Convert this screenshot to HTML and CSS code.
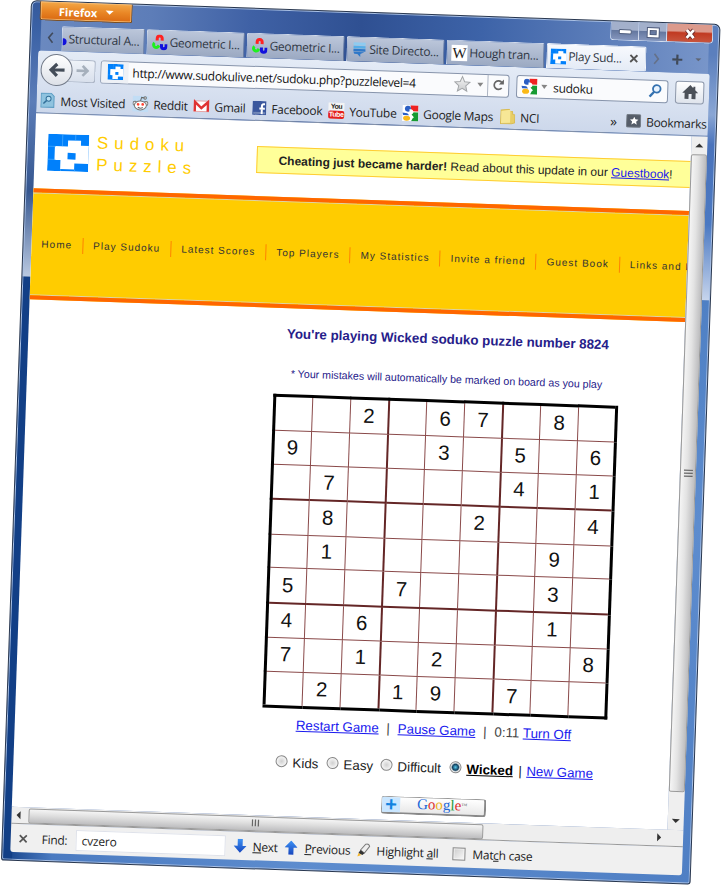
FILE: index.html
```html
<!DOCTYPE html>
<html lang="en">
<head>
<meta charset="utf-8">
<title>Play Sudoku</title>
<link rel="stylesheet" href="styles.css">
</head>
<body>
<svg class="defs" width="0" height="0">
  <defs>
    <linearGradient id="star-fill" x1="0" y1="0" x2="0" y2="1"><stop offset="0" stop-color="#f6f6f6"/><stop offset="1" stop-color="#c8cacc"/></linearGradient>
    <linearGradient id="arrow-fill" x1="0" y1="0" x2="0" y2="1"><stop offset="0" stop-color="#3d92f5"/><stop offset="1" stop-color="#1746bd"/></linearGradient>
    <symbol id="sudoku" viewBox="0 0 41 37" preserveAspectRatio="none">
      <path fill="#0080fb" d="M0 0h41v37H0z"/>
      <path fill="#fff" d="M20 6h13v5h8v18H27v6H13v-9H7V12h13z"/>
      <path fill="#0080fb" d="M20 18.500h8v6.500h-8z"/>
      <path fill="none" stroke="#58b4ff" stroke-width=".6" d="M0 12.500h8M14.500 0v12M27.500 0v6M0 25.500h8M13.500 35v2M27.500 35v2"/>
    </symbol>
    <symbol id="magnets" viewBox="0 0 16 16">
      <g fill="none" stroke-width="3">
        <path stroke="#f22" d="M5.500 6V4a2.500 2.500 0 0 1 5 0v2"/>
        <path stroke="#1ff01f" d="M3 8.500a2.600 2.600 0 1 0 3.500 4L7.500 11"/>
        <path stroke="#1111dd" d="M10 9.500v2.300a2.300 2.300 0 0 0 4.600 0V9.500"/>
      </g>
    </symbol>
    <symbol id="google" viewBox="0 0 16 16">
      <path fill="#fff" d="M0 0h16v16H0z"/><path fill="#e22" d="M8 0h8v6H9z"/><path fill="#179b32" d="M8 7h8v9H9l2-4z"/>
      <circle cx="5.500" cy="3.500" r="3" fill="#2b5fc4"/><path fill="#2b5fc4" d="M0 7.500 5 8l2 2H1z"/><ellipse cx="4.500" cy="13" rx="3.500" ry="2.500" fill="#fbb917"/>
      <path fill="#fff" d="M8 4c4 0 4 5 1 5l3 3-4 1-1-9z"/>
    </symbol>
  </defs>
</svg>
<main class="window">
  <header class="titlebar">
    <button class="menu">Firefox <i></i></button>
    <div class="controls">
      <span><svg width="14" height="8"><rect x="1" y="2" width="12" height="4" rx="1" fill="#fff" stroke="#52607f"/></svg></span>
      <span><svg width="14" height="12"><rect x="2.500" y="2.500" width="9" height="7" fill="none" stroke="#4d597a" stroke-width="4"/><rect x="2.500" y="2.500" width="9" height="7" fill="none" stroke="#fff" stroke-width="2"/></svg></span>
      <span class="close"><svg width="14" height="12"><path d="m3.500 2 7 8m0-8-7 8" stroke="#6e2b2b" stroke-width="4.500"/><path d="m3.500 2 7 8m0-8-7 8" stroke="#fff" stroke-width="2.800"/></svg></span>
    </div>
  </header>
  <nav class="tabs">
    <svg class="scroll-left" width="10" height="12"><path d="M7 1 3 6l4 5" fill="none" stroke="#404a5c" stroke-width="1.600"/></svg>
    <div class="tab clipped"><b class="dot"></b><span>Structural A...</span></div>
    <div class="tab"><svg width="16" height="16"><use href="#magnets"/></svg><span>Geometric I...</span></div>
    <div class="tab"><svg width="16" height="16"><use href="#magnets"/></svg><span>Geometric I...</span></div>
    <div class="tab"><svg width="16" height="16"><path fill="#8ecbf0" d="M2 1h12v3H2z"/><path fill="#55aee8" d="M2 4.500h12v2.500H2z"/><path fill="#2f78c8" d="M2 7.500h12V10H2zM2 10.500h11l-4 2v3l-3-3H3z"/></svg><span>Site Directo...</span></div>
    <div class="tab"><b class="wiki">W</b><span>Hough tran...</span></div>
    <div class="tab active"><svg width="16" height="16"><use href="#sudoku"/></svg><span>Play Sud...</span><svg class="x" width="9" height="9"><path d="m1 1 7 7m0-7L1 8" stroke="#555" stroke-width="1.900"/></svg></div>
    <svg class="tab-tools" width="62" height="14"><path d="m8 2 4 5-4 5" fill="none" stroke="#65718a" stroke-width="1.700"/><path d="M26 7h10m-5-5v10" stroke="#404957" stroke-width="2.200"/><path d="M49 5h6l-3 3z" fill="#5f6675"/></svg>
  </nav>
  <section class="toolbar">
    <div class="navrow">
      <div class="backforward">
        <div class="back"><svg width="18" height="16"><path d="M9.500 2 3.500 8l6 6M4 8h13" fill="none" stroke="#434c58" stroke-width="3.200"/></svg></div>
        <div class="forward"><svg width="14" height="14"><path d="m7 2 5 5-5 5M1 7h10" fill="none" stroke="#a6b0bc" stroke-width="2.600"/></svg></div>
      </div>
      <div class="url">
        <span class="identity"><svg width="16" height="16"><use href="#sudoku"/></svg></span>
        <span class="address">http://www.sudokulive.net/sudoku.php?puzzlelevel=4</span>
        <svg class="star" width="18" height="18"><path d="m9 1.500 2.200 5 5.300.500-4 3.600 1.200 5.400L9 13.200 4.300 16l1.200-5.400-4-3.600 5.300-.5z" fill="url(#star-fill)" stroke="#a2a5a8"/></svg>
        <svg class="drop" width="8" height="6"><path d="M1 1h6L4 5z" fill="#858585"/></svg>
        <span class="reload"><svg width="14" height="14"><path d="M10.500 9.500a4.300 4.300 0 1 1 0-5.500" fill="none" stroke="#666" stroke-width="1.700"/><path d="M12.500 1v5h-5z" fill="#666"/></svg></span>
      </div>
      <div class="search">
        <svg width="16" height="16"><use href="#google"/></svg>
        <svg class="drop" width="8" height="6"><path d="M1 1h6L4 5z" fill="#858585"/></svg>
        <span>sudoku</span>
        <svg class="glass" width="14" height="14"><circle cx="8.500" cy="5" r="3.800" fill="#e8f3ff" stroke="#3572b0" stroke-width="1.800"/><path d="m6 8-4.500 5" stroke="#3572b0" stroke-width="2.300"/></svg>
      </div>
      <div class="home"><svg width="16" height="15"><path fill="#4b5058" d="M8 0 0 8h2.500v6H6.500V9h3v5h4V8H16l-3-3V1.500h-2V3z"/></svg></div>
    </div>
    <div class="bookmarks">
      <svg width="15" height="16"><path fill="#8fc3df" stroke="#5b9cc2" d="M.5.500h10l3 3v11H.500z"/><circle cx="8" cy="6" r="2.500" fill="#b8dff2" stroke="#326f99"/><path d="m6 8-3 3" stroke="#326f99" stroke-width="1.500"/></svg><span class="mv">Most Visited</span>
      <svg width="16" height="16"><path fill="#c1ddf5" d="M0 0h16v16H0z"/><circle cx="2.500" cy="7.500" r="2" fill="#eee" stroke="#777"/><circle cx="13.500" cy="7.500" r="2" fill="#eee" stroke="#777"/><ellipse cx="8" cy="9.500" rx="6" ry="4.500" fill="#fff" stroke="#777"/><circle cx="5.700" cy="8.500" r="1.400" fill="#f43"/><circle cx="10.300" cy="8.500" r="1.400" fill="#f43"/><path d="M5.500 11.500q2.500 1.500 5 0M8 5l1-3.500 3 .5" fill="none" stroke="#666"/><circle cx="12.500" cy="2" r="1.200" fill="#fff" stroke="#666"/></svg><span class="rd">Reddit</span>
      <svg width="16" height="16"><path fill="#fff" stroke="#e5a5a5" d="M.5 3h15v10.500H.500z"/><path d="M1.500 13.500V4L8 10l6.500-6v9.500" fill="none" stroke="#df3434" stroke-width="2.400"/></svg><span class="gm">Gmail</span>
      <svg width="14" height="14"><path fill="#3a579d" d="M0 0h14v14H0z"/><path fill="#7288b8" d="M1 11h12v2H1z"/><path fill="none" stroke="#fff" stroke-width="2" d="M12.500 3h-1.200Q9.500 3 9.500 5v8M7 7.500h5.500"/></svg><span class="fb">Facebook</span>
      <span class="yt-icon"><b>You</b><b>Tube</b></span><span class="yt">YouTube</span>
      <svg width="16" height="16"><use href="#google"/></svg><span class="mp">Google Maps</span>
      <svg width="15" height="16"><path fill="#e8ce66" stroke="#d9bc54" d="M.5 1.500 9 .500v2h3l.5 3 2 .5v8l-3 1H.500z"/><path fill="#f7e796" d="M1 2.500 10 1v13l-9 .5z"/></svg><span class="nc">NCI</span>
      <span class="more">»</span>
      <svg width="15" height="14"><rect x=".5" y=".5" width="14" height="12.500" rx="1" fill="#555d69" stroke="#747c86"/><path fill="#fff" d="m8 2.500 1.200 2.700 3 .3-2.200 2 .7 3L8 9l-2.700 1.500.7-3-2.200-2 3-.3z"/></svg><span>Bookmarks</span>
    </div>
  </section>
  <section class="viewport">
    <div class="page">
      <div class="masthead">
        <svg class="logo" width="41" height="37"><use href="#sudoku"/></svg>
        <div class="brand">Sudoku<br>Puzzles</div>
        <div class="notice"><span><b>Cheating just became harder!</b> Read about this update in our <a>Guestbook</a>!</span></div>
      </div>
      <div class="menu-band">
        <span>Home</span><span>Play Sudoku</span><span>Latest Scores</span><span>Top Players</span><span>My Statistics</span><span>Invite a friend</span><span>Guest Book</span><span>Links and Info</span>
      </div>
      <div class="game">
        <h1>You're playing Wicked soduko puzzle number 8824</h1>
        <p class="hint">* Your mistakes will automatically be marked on board as you play</p>
        <table class="board">
          <tr><td></td><td></td><td>2</td><td></td><td>6</td><td>7</td><td></td><td>8</td><td></td></tr>
          <tr><td>9</td><td></td><td></td><td></td><td>3</td><td></td><td>5</td><td></td><td>6</td></tr>
          <tr><td></td><td>7</td><td></td><td></td><td></td><td></td><td>4</td><td></td><td>1</td></tr>
          <tr><td></td><td>8</td><td></td><td></td><td></td><td>2</td><td></td><td></td><td>4</td></tr>
          <tr><td></td><td>1</td><td></td><td></td><td></td><td></td><td></td><td>9</td><td></td></tr>
          <tr><td>5</td><td></td><td></td><td>7</td><td></td><td></td><td></td><td>3</td><td></td></tr>
          <tr><td>4</td><td></td><td>6</td><td></td><td></td><td></td><td></td><td>1</td><td></td></tr>
          <tr><td>7</td><td></td><td>1</td><td></td><td>2</td><td></td><td></td><td></td><td>8</td></tr>
          <tr><td></td><td>2</td><td></td><td>1</td><td>9</td><td></td><td>7</td><td></td><td></td></tr>
        </table>
        <div class="actions"><a>Restart Game</a><i>|</i><a>Pause Game</a><i>|</i><span>0:11 <a>Turn Off</a></span></div>
        <div class="levels">
          <label class="kids"><b class="radio"></b>Kids</label>
          <label class="easy"><b class="radio"></b>Easy</label>
          <label class="difficult"><b class="radio"></b>Difficult</label>
          <label class="wicked"><b class="radio on"></b><strong>Wicked</strong></label>
          <span>|</span><a>New Game</a>
        </div>
        <div class="gadd"><b>+</b><span><i class="c1">G</i><i class="c2">o</i><i class="c3">o</i><i class="c1">g</i><i class="c4">l</i><i class="c2">e</i><small>™</small></span></div>
      </div>
    </div>
    <div class="vscroll">
      <svg width="16" height="18"><path d="M4 11h8L8 7z" fill="#333"/></svg>
      <div class="vthumb"><svg width="9" height="9"><path d="M0 1h9M0 4h9M0 7h9" stroke="#666" stroke-width="1.300"/></svg></div>
      <svg class="down" width="16" height="18"><path d="M4 7h8l-4 4z" fill="#333"/></svg>
    </div>
  </section>
  <div class="hscroll">
    <svg width="17" height="16"><path d="M9 4v8L5 8z" fill="#333"/></svg>
    <div class="hthumb"><svg width="9" height="8"><path d="M1 0v7M4 0v7M7 0v7" stroke="#666" stroke-width="1.300"/></svg></div>
    <svg class="right" width="17" height="16"><path d="M7 4v8l4-4z" fill="#333"/></svg>
  </div>
  <footer class="findbar">
    <svg class="fx" width="9" height="9"><path d="m1 1 7 7m0-7L1 8" stroke="#555" stroke-width="1.700"/></svg>
    <span class="f-label">Find:</span>
    <span class="f-input">cvzero</span>
    <svg width="13" height="15"><path d="M4 0h5v7h4l-6.500 7L0 7h4z" fill="url(#arrow-fill)"/></svg><span class="f-next"><u>N</u>ext</span>
    <svg width="13" height="15"><path d="M4 14h5V7h4L6.500 0 0 7h4z" fill="url(#arrow-fill)"/></svg><span class="f-prev"><u>P</u>revious</span>
    <svg width="14" height="14"><path d="m4 7 5-6q3-1 4 2L8 10z" fill="#eee" stroke="#777"/><path d="m4 7 4 3-2 2-4-2z" fill="#333"/><path d="m2 10 3 2-4 1.500z" fill="#f7b92d"/></svg><span class="f-high">Highlight <u>a</u>ll</span>
    <b class="check"></b><span>Mat<u>c</u>h case</span>
  </footer>
</main>
</body>
</html>
```
FILE: styles.css
```css
* { box-sizing: border-box; }
html, body { margin: 0; width: 723px; height: 886px; overflow: hidden; background: #fff; }
svg { display: block; flex: none; }
.defs { position: absolute; }
i { font-style: normal; }

.window {
  width: 690px; height: 861px; margin: 0 0 0 31px; padding: 0 8px;
  transform: rotate(2deg); transform-origin: 0 0;
  display: flex; flex-direction: column;
  border: 1px solid #27364f; border-radius: 6px 6px 3px 3px;
  box-shadow: inset 0 0 0 1px #a9c0e4;
  background:
    linear-gradient(#35599b 0, #3b62a6 30px, #5c7db8 100px, #35568f 190px, #b9c8e0 275px, #123f86 276px) left / 10px 100% no-repeat,
    linear-gradient(#5b7fbd 0, #5b7fbd 30px, #8aa6d4 90px, #4a73bb 120px, #4b79c2 200px, #c6d4ec 275px, #4f80c4 276px, #5d8cce 500px, #4f7fc4) right / 10px 100% no-repeat,
    linear-gradient(90deg, #123f86 0, #4b7bc1 50px, #5d8cce 300px, #4f7fc4) bottom / 100% 10px no-repeat,
    linear-gradient(90deg, #6c8ac0 0, #5d7db8 120px, #3f61a5 220px, #2f5092 330px, #3d63a8 450px, #7b98cb 690px);
  font-family: "Open Sans", "Noto Sans", sans-serif; font-size: 12px; letter-spacing: -.3px; color: #222; white-space: nowrap;
}

.titlebar { display: flex; justify-content: space-between; height: 24px; }
.menu {
  width: 93px; height: 19px; padding: 0; border: 1px solid #7d4b16; border-top: 0; border-radius: 0 0 3px 3px;
  background: linear-gradient(#f3a848, #e98625 50%, #da6a12); box-shadow: inset 0 0 0 1px #f5ba70;
  display: flex; align-items: center; justify-content: center; gap: 8px;
  font: bold 11px "Open Sans", sans-serif; color: #fff;
}
.menu i { border: 4px solid transparent; border-top-color: #fff; border-bottom: 0; }
.controls { display: flex; width: 103px; height: 19px; margin-right: -2px; border: 1px solid #d5dff0; border-top: 0; border-radius: 0 0 4px 4px; overflow: hidden; }
.controls span { width: 28px; padding-top: 1px; display: flex; align-items: center; justify-content: center; background: linear-gradient(#a3b0cb 45%, #64779f 50%, #8596bd); border-right: 1px solid #dce3f1; }
.controls .close { flex: 1; border: 0; background: linear-gradient(#dc9a8c 40%, #c13a22 50%, #c8553e); }

.tabs { display: flex; height: 25px; }
.scroll-left { margin: 6px 6px 0 7px; }
.tab { width: 98px; height: 25px; margin-right: 2px; padding: 0 0 1px 4px; display: flex; align-items: center; gap: 2px; background: linear-gradient(#bbc6da, #9ba9c2); border: 1px solid #d1daea; border-bottom: 0; border-right-color: #75839f; border-radius: 2px 2px 0 0; flex: none; overflow: hidden; color: #303744; }
.tab.clipped { width: 83px; padding-left: 0; gap: 2px; }
.dot { width: 4px; height: 7px; background: #1111dd; border-radius: 0 4px 4px 0; margin-top: 6px; }
.wiki { width: 16px; height: 16px; background: #fff; font: 15px/16px "Liberation Serif", serif; letter-spacing: 0; display: flex; justify-content: center; color: #222; }
.tab.active { width: 100px; margin-right: 0; padding-left: 3px; background: linear-gradient(#f7f9fd, #e4ebf6); border-color: #f5f8fd; }
.tab .x { margin-left: 6px; }
.tab-tools { margin-top: 5px; }

.toolbar { height: 63px; background: linear-gradient(#e4ebf6, #cdd8eb); border-bottom: 1px solid #8592a8; border-radius: 3px 3px 0 0; }
.navrow { display: flex; align-items: center; height: 38px; }
.backforward { display: flex; align-items: center; width: 63px; padding-left: 3px; flex: none; }
.back { width: 32px; height: 32px; border: 1px solid #737b89; border-radius: 50%; background: linear-gradient(#fff, #dde1e8); display: flex; align-items: center; justify-content: center; flex: none; z-index: 1; }
.forward { width: 28px; height: 23px; margin-left: -5px; padding-left: 2px; border: 1px solid #a9b3c4; border-left: 0; border-radius: 0 3px 3px 0; display: flex; align-items: center; justify-content: center; background: linear-gradient(#eff3f9, #d9e0ec); }
.url { display: flex; align-items: center; width: 409px; height: 23px; border: 1px solid #8794ab; border-radius: 3px; background: #fafbfd; color: #111; letter-spacing: -.31px; }
.identity { width: 27px; height: 21px; padding-left: 6px; display: flex; align-items: center; background: #eef1f6; }
.address { width: 321px; padding-left: 4px; }
.star { margin-left: 4px; }
.url .drop { margin-left: 5px; }
.reload { margin-left: auto; width: 21px; height: 21px; border-left: 1px solid #adb5c3; display: flex; align-items: center; justify-content: center; }
.search { display: flex; align-items: center; width: 152px; height: 23px; margin-left: 7px; padding: 0 5px 0 4px; border: 1px solid #8794ab; border-radius: 3px; background: #fafbfd; color: #111; }
.search .drop { margin: 0 5px 0 3px; }
.glass { margin-left: auto; }
.home { width: 29px; height: 23px; margin-left: 7px; border: 1px solid #8f99ab; border-radius: 3px; background: linear-gradient(#fff, #dfe4ec); display: flex; align-items: center; justify-content: center; }

.bookmarks { display: flex; align-items: center; height: 24px; padding-left: 4px; }
.bookmarks > span { margin-left: 5px; flex: none; }
.mv { width: 72px; }
.rd { width: 40px; }
.gm { width: 38px; }
.fb { width: 57px; }
.bookmarks .yt-icon { margin-left: 0; width: 16px; height: 16px; display: flex; flex-direction: column; font: bold 7px/8px "Liberation Sans", sans-serif; letter-spacing: -.4px; text-align: center; }
.yt-icon b { background: #f4f4f4; height: 8px; }
.yt-icon b + b { background: #e4201d; color: #fff; border-radius: 2px; }
.yt { width: 53px; }
.mp { width: 77px; }
.nc { width: 90px; }
.bookmarks .more { width: 16px; margin-left: 0; font-size: 14px; }

.viewport { display: flex; height: 694px; }
.page { width: 656px; flex: none; background: #fff; overflow: hidden; font-family: "Liberation Sans", Arial, sans-serif; letter-spacing: 0; }
.masthead { display: flex; height: 75px; padding-left: 13px; }
.logo { margin-top: 20px; }
.brand { flex: none; width: 160px; margin: 17px 0 0 8px; font-size: 17px; line-height: 22px; letter-spacing: 5.9px; color: #fc0; }
.notice { flex: 1; height: 27px; margin-top: 25px; padding-left: 21px; display: flex; align-items: center; background: #ff9; border: 1px solid #fc3; border-right: 0; font-size: 12px; }
a { color: #1a1aee; text-decoration: underline; }
.menu-band { display: flex; align-items: center; height: 111px; border: solid #f60; border-width: 4px 0; box-shadow: inset 0 1px #ddd4aa, inset 0 -1px #ddd4aa; background: #fc0; font-size: 10px; line-height: 16px; letter-spacing: 1px; color: #333; }
.menu-band span { padding: 0 10px; border-left: 1px solid #ff8200; }
.menu-band span:first-child { border: 0; }

.game { padding: 17px 0 0 247px; }
.game h1 { width: 345px; margin: 0; text-align: center; font-size: 13.330px; line-height: 18px; color: #26208a; }
.hint { width: 345px; margin: 20px 0 11px; text-align: center; font-size: 10.670px; line-height: 20px; color: #26208a; }
.board { width: 345px; height: 314px; border: 3px solid #000; border-collapse: collapse; table-layout: fixed; font-size: 20.500px; line-height: 24px; color: #111; }
.board td { padding: 0 0 1px; border: 1px solid #8a4a4a; text-align: center; }
.board td:nth-child(3n) { border-right: 2px solid #642626; }
.board tr:nth-child(3n) td { border-bottom: 2px solid #642626; }
.board tr td:last-child { border-right: 3px solid #000; }
.board tr:last-child td { border-bottom: 3px solid #000; }
.actions { display: flex; margin: 8px 0 0 34px; font-size: 13.330px; line-height: 18px; color: #444; }
.actions i { width: 19px; text-align: center; }
.levels { display: flex; align-items: center; height: 20px; margin: 18px 0 0 15px; font-size: 13.330px; }
.levels label { display: flex; align-items: center; gap: 5px; flex: none; }
.kids { width: 51px; } .easy { width: 54px; } .difficult { width: 69px; } .wicked { width: 69px; }
.levels span { width: 8px; }
.wicked strong { text-decoration: underline; color: #000; }
.radio { width: 12px; height: 12px; margin-bottom: 3px; flex: none; border: 1px solid #868686; border-radius: 50%; background: radial-gradient(#d0d0d0, #f3f3f3 65%); }
.radio.on { background: radial-gradient(circle, #57c9ed 0, #12415f 3px, #eee 4.500px); }
.gadd { display: flex; width: 105px; height: 18px; margin: 20px 0 0 122px; border: 1px solid #999; border-right: 2px solid #888; border-bottom: 2px solid #888; border-radius: 3px; background: linear-gradient(#fff, #e8e8e8); }
.gadd b { width: 18px; background: #c9e6ff; color: #1283df; font-size: 20px; line-height: 14px; text-align: center; }
.gadd span { flex: 1; text-align: center; font: 15px/13px "Liberation Serif", serif; }
.gadd small { font-size: 6px; line-height: 6px; vertical-align: 3px; color: #666; }
.c1 { color: #2468d8; } .c2 { color: #dc3030; } .c3 { color: #efb217; } .c4 { color: #229b40; }

.vscroll { flex: 1; display: flex; flex-direction: column; background: #efefef; }
.vthumb { height: 638px; border: 1px solid #999; border-radius: 2px; background: linear-gradient(90deg, #f5f5f5, #e3e3e3 45%, #bdbdbf); display: flex; align-items: center; justify-content: center; }
.down { margin-top: auto; }
.hscroll { height: 17px; display: flex; align-items: center; background: #eee; border-bottom: 1px solid #999; }
.hthumb { width: 455px; height: 15px; border: 1px solid #999; border-radius: 2px; background: linear-gradient(#f5f5f5, #dedede 45%, #bdbdbf); display: flex; align-items: center; justify-content: center; }
.hscroll .right { margin: 0 16px 0 auto; }

.findbar { display: flex; align-items: center; height: 28px; padding-left: 8px; background: #f0f0f0; border-radius: 0 0 3px 3px; }
.f-label { width: 34px; margin-left: 14px; }
.f-input { width: 150px; height: 21px; padding-left: 5px; margin-right: 8px; background: #fff; border: 1px solid #dfe2ea; line-height: 19px; letter-spacing: -.2px; }
.findbar .f-next { width: 32px; margin-left: 6px; }
.findbar .f-prev { width: 52px; margin-left: 7px; }
.findbar .f-high { width: 76px; margin-left: 6px; }
.check { width: 13px; height: 13px; margin-right: 7px; border: 1px solid #8a8a8a; background: linear-gradient(135deg, #ccc, #fafafa); box-shadow: inset 0 0 0 1px #f4f4f4; }
```
